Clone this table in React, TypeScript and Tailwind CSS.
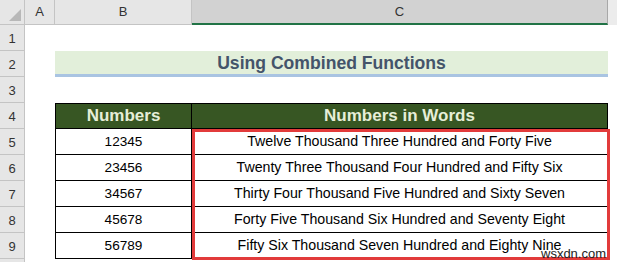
const data = [
  { n: '12345', w: 'Twelve Thousand Three Hundred and Forty Five' },
  { n: '23456', w: 'Twenty Three Thousand Four Hundred and Fifty Six' },
  { n: '34567', w: 'Thirty Four Thousand Five Hundred and Sixty Seven' },
  { n: '45678', w: 'Forty Five Thousand Six Hundred and Seventy Eight' },
  { n: '56789', w: 'Fifty Six Thousand Seven Hundred and Eighty Nine' },
];

const RowHead = ({ n }: { n?: number }) => (
  <div className="w-[25px] shrink-0 h-full bg-[#e6e6e6] border-r border-b border-[#c4c4c4] flex items-end justify-center pb-[2px] text-[13px] text-[#333]">
    {n}
  </div>
);

export default function App() {
  return (
    <div className="relative w-[617px] h-[262px] overflow-hidden bg-white font-['Liberation_Sans',sans-serif]">
      {/* column headers */}
      <div className="flex h-[25px] bg-[#e6e6e6] text-[13px] text-[#333]">
        <div className="w-[25px] shrink-0 relative border-r border-b border-[#c4c4c4]">
          <div className="absolute right-[3px] bottom-[3px] w-0 h-0 border-l-[12px] border-l-transparent border-b-[12px] border-b-[#b8b8b8]" />
        </div>
        <div className="w-[30px] shrink-0 border-r border-b border-[#c4c4c4] flex items-center justify-center">A</div>
        <div className="w-[137px] shrink-0 border-r border-b border-[#c4c4c4] flex items-center justify-center">B</div>
        <div className="w-[416px] shrink-0 bg-[#d2d2d2] border-r border-[#a8a8a8] border-b-2 border-b-[#217346] flex items-center justify-center">C</div>
        <div className="flex-1 bg-[#ececec]" />
      </div>

      {/* row 1 */}
      <div className="flex h-[26px]">
        <RowHead n={1} />
      </div>

      {/* row 2: title */}
      <div className="flex h-[26px]">
        <RowHead n={2} />
        <div className="w-[30px] shrink-0" />
        <div className="w-[553px] shrink-0 h-full bg-[#e2efda] border-b-[3px] border-[#a9c4e2] flex items-center justify-center pt-[2px] text-[17.6px] font-bold text-[#44546a]">
          Using Combined Functions
        </div>
      </div>

      {/* row 3 */}
      <div className="flex h-[26px]">
        <RowHead n={3} />
      </div>

      {/* row 4: table header */}
      <div className="flex h-[26px]">
        <RowHead n={4} />
        <div className="w-[30px] shrink-0" />
        <div className="w-[137px] shrink-0 h-full bg-[#375623] border border-black flex items-center justify-center text-[17px] font-bold text-[#e6eed8]">
          Numbers
        </div>
        <div className="w-[416px] shrink-0 h-full bg-[#375623] border-y border-r border-black flex items-center justify-center text-[17px] font-bold text-[#e6eed8]">
          Numbers in Words
        </div>
      </div>

      {data.map((d, i) => (
        <div key={d.n} className="flex h-[26px]">
          <RowHead n={i + 5} />
          <div className="w-[30px] shrink-0" />
          <div className="w-[137px] shrink-0 h-full border-x border-b border-black flex items-center justify-center pt-[1px] text-[13.6px] text-black">
            {d.n}
          </div>
          <div className="w-[416px] shrink-0 h-full border-r border-b border-black flex items-center justify-center pt-[1px] text-[14.2px] text-black">
            {d.w}
          </div>
        </div>
      ))}

      <div className="flex h-[10px]">
        <RowHead />
      </div>

      {/* highlight box */}
      <div className="absolute left-[192px] top-[129px] w-[418px] h-[131px] border-[3px] border-[#e23b3b]" />

      <div className="absolute left-[541px] top-[244px] text-[13px] text-[#222]">wsxdn.com</div>
    </div>
  );
}
